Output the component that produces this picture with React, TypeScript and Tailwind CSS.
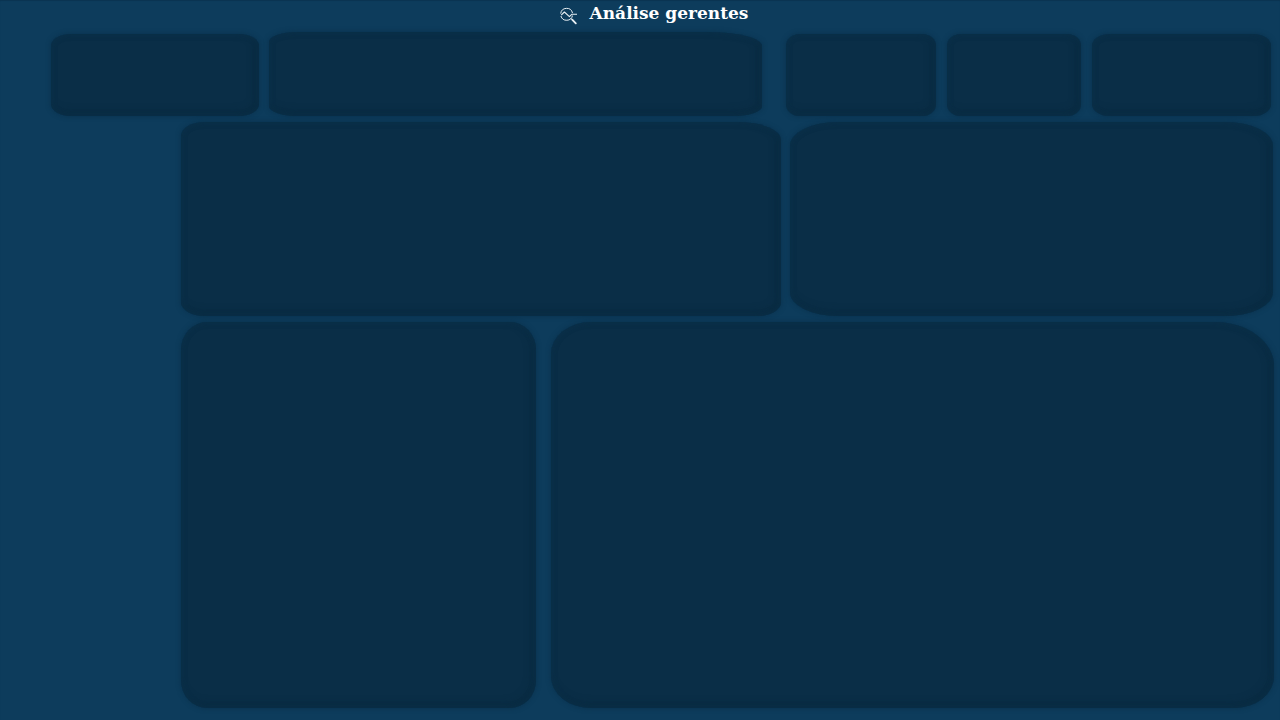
const panel =
  "bg-[#0a2e47] shadow-[0_0_4px_1px_rgba(10,46,71,0.55),inset_0_0_5px_1px_rgba(13,54,83,0.4),inset_-3px_-3px_8px_rgba(8,40,60,0.7)]";

function Panel({ className }: { className: string }) {
  return <section className={`${panel} ${className}`} />;
}

function AnalysisIcon() {
  return (
    <svg
      aria-hidden="true"
      viewBox="0 0 18 18"
      className="size-[18px] shrink-0 text-[#e8eff3]"
      fill="none"
      stroke="currentColor"
    >
      <path d="M.7 6.6a6 6 0 0 1 11.8-.6M12.5 8.6A6 6 0 0 1 .9 9" strokeWidth="1" />
      <path d="M1.2 8.2 4.4 5l5 4.6 2.6-2.4h5" strokeWidth="1.1" strokeLinejoin="round" />
      <path d="m10.7 11.2 1.6 1.6" strokeWidth="1" />
      <path d="m12.2 12.7 3.6 3.6" strokeWidth="1.9" strokeLinecap="round" />
    </svg>
  );
}

export default function App() {
  return (
    <div className="flex min-h-screen flex-col bg-[#0d3c5c] pb-3 shadow-[inset_0_1px_1px_#0a3451]">
      <header className="flex h-8 shrink-0 items-start justify-center gap-3 pl-7 pt-px">
        <span className="pt-1.5">
          <AnalysisIcon />
        </span>
        <h1 className="font-['DejaVu_Serif',serif] text-[17px] leading-6 font-bold text-white">
          Análise gerentes
        </h1>
      </header>

      <main className="grid grow grid-rows-[84fr_194fr_386fr] gap-1.5">
        <div className="grid grid-cols-[711fr_485fr] gap-6 pl-[51px] pr-[9px]">
          <div className="grid grid-cols-[208fr_493fr] gap-2.5">
            <Panel className="mt-0.5 rounded-[20px/12px]" />
            <Panel className="rounded-[28px/10px] rounded-tr-[56px_14px]" />
          </div>
          <div className="mt-0.5 grid grid-cols-[150fr_134fr_179fr] gap-[11px]">
            <Panel className="rounded-[14px/12px]" />
            <Panel className="rounded-[14px/12px]" />
            <Panel className="rounded-[18px/12px]" />
          </div>
        </div>
        <div className="grid grid-cols-[600fr_483fr] gap-[9px] pl-[181px] pr-[7px]">
          <Panel className="rounded-[24px/14px] rounded-tr-[44px_18px]" />
          <Panel className="rounded-[48px/24px]" />
        </div>
        <div className="grid grid-cols-[355fr_723fr] gap-[15px] pl-[181px] pr-1.5">
          <Panel className="rounded-[26px/28px]" />
          <Panel className="rounded-[40px/32px] rounded-tr-[60px_44px]" />
        </div>
      </main>
    </div>
  );
}
